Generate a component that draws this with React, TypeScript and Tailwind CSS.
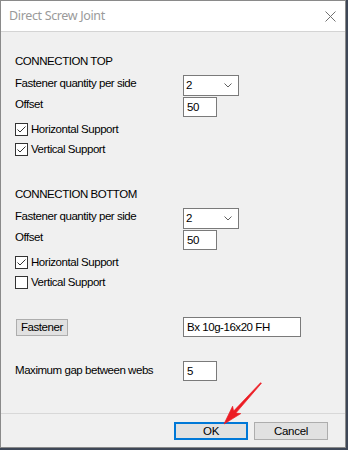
import { ReactNode } from 'react'

const body = { fontFamily: '"Liberation Sans", Arial, sans-serif' }

function Check({ checked }: { checked: boolean }) {
  return (
    <span className="w-[13px] h-[13px] border border-[#333333] bg-white flex items-center justify-center">
      {checked && (
        <svg width="11" height="11" viewBox="0 0 11 11">
          <polyline points="1.5,5.5 4,8 9.5,2.5" fill="none" stroke="#333333" strokeWidth="1" />
        </svg>
      )}
    </span>
  )
}

function CheckRow({ label, checked, mt }: { label: string; checked: boolean; mt: string }) {
  return (
    <div className={`flex items-center h-[15px] gap-[3px] ${mt}`}>
      <Check checked={checked} />
      <span className="leading-[13px]">{label}</span>
    </div>
  )
}

function Row({ label, children, mt, labelMt }: { label: string; children: ReactNode; mt: string; labelMt: string }) {
  return (
    <div className={`grid grid-cols-[168px_auto] items-start ${mt}`}>
      <span className={`leading-[13px] ${labelMt}`}>{label}</span>
      {children}
    </div>
  )
}

function Select({ value }: { value: string }) {
  return (
    <div className="w-[56px] h-[21px] border border-[#7a7a7a] bg-white flex items-center justify-between pl-[2px] pr-[6px]">
      <span className="leading-[13px]">{value}</span>
      <svg width="8" height="5" viewBox="0 0 8 5">
        <polyline points="0.5,0.5 4,4 7.5,0.5" fill="none" stroke="#606060" strokeWidth="1" />
      </svg>
    </div>
  )
}

function Field({ value, w }: { value: string; w: string }) {
  return (
    <div className={`${w} h-[20px] border border-[#7a7a7a] bg-white flex items-center pl-[3px]`}>
      <span className="leading-[13px]">{value}</span>
    </div>
  )
}

function Section({ title, vertical, first }: { title: string; vertical: boolean; first: boolean }) {
  return (
    <div className={first ? 'mt-[23px]' : 'mt-[31px]'}>
      <div className="leading-[13px]">{title}</div>
      <Row label="Fastener quantity per side" mt="mt-[7px]" labelMt="mt-[2px]">
        <Select value="2" />
      </Row>
      <Row label="Offset" mt="mt-[1px]" labelMt="mt-[1px]">
        <Field value="50" w="w-[34px]" />
      </Row>
      <CheckRow label="Horizontal Support" checked={true} mt="mt-[5px]" />
      <CheckRow label="Vertical Support" checked={vertical} mt="mt-[5px]" />
    </div>
  )
}

export default function App() {
  return (
    <div className="relative w-[348px] h-[450px] bg-[#3e4757]">
      <div className="w-[346px] h-[448px] border border-[#8a8a8a] bg-[#f0f0f0] flex flex-col">
        <div className="h-[31px] bg-white border-b border-[#d4d4d4] flex items-center justify-between pl-[8px] pr-[8px]">
          <span
            className="text-[12.5px] tracking-[-0.35px] text-[#9a9a9a]"
            style={{ fontFamily: '"Noto Sans", "Open Sans", sans-serif' }}
          >
            Direct Screw Joint
          </span>
          <svg width="11" height="11" viewBox="0 0 11 11" className="mr-[1px]">
            <line x1="0.5" y1="0.5" x2="10.5" y2="10.5" stroke="#707070" strokeWidth="1" />
            <line x1="10.5" y1="0.5" x2="0.5" y2="10.5" stroke="#707070" strokeWidth="1" />
          </svg>
        </div>

        <div className="flex-1 pl-[14px] text-[11.5px] text-black tracking-[-0.45px]" style={body}>
          <Section title="CONNECTION TOP" vertical={true} first={true} />
          <Section title="CONNECTION BOTTOM" vertical={false} first={false} />

          <div className="grid grid-cols-[168px_auto] items-center mt-[27px]">
            <div className="pl-[1px]">
              <button className="w-[52px] h-[17px] bg-[#e1e1e1] border border-[#adadad] flex items-center pl-[4px] leading-[13px]">
                Fastener
              </button>
            </div>
            <Field value="Bx 10g-16x20 FH" w="w-[118px]" />
          </div>

          <Row label="Maximum gap between webs" mt="mt-[24px]" labelMt="mt-[3px]">
            <Field value="5" w="w-[34px]" />
          </Row>
        </div>

        <div
          className="h-[34px] border-t border-[#d8d8d8] flex justify-end gap-[6px] pr-[17px] pt-[8px] text-[11.5px] tracking-[-0.3px]"
          style={body}
        >
          <button className="w-[74px] h-[18px] bg-[#e1e1e1] border-2 border-[#0078d7] flex items-center justify-center leading-[13px]">
            OK
          </button>
          <button className="w-[74px] h-[18px] bg-[#e1e1e1] border border-[#adadad] flex items-center justify-center leading-[13px]">
            Cancel
          </button>
        </div>
      </div>

      <svg className="absolute left-0 top-0 pointer-events-none" width="348" height="450" viewBox="0 0 348 450">
        <polygon
          points="261.4,383.3 235.8,413.1 240.8,413.6 224,424 232.6,406.2 233.6,411.1 260.6,382.7"
          fill="#ec1c24"
          stroke="#ec1c24"
          strokeWidth="0.7"
          strokeLinejoin="round"
        />
      </svg>
    </div>
  )
}
